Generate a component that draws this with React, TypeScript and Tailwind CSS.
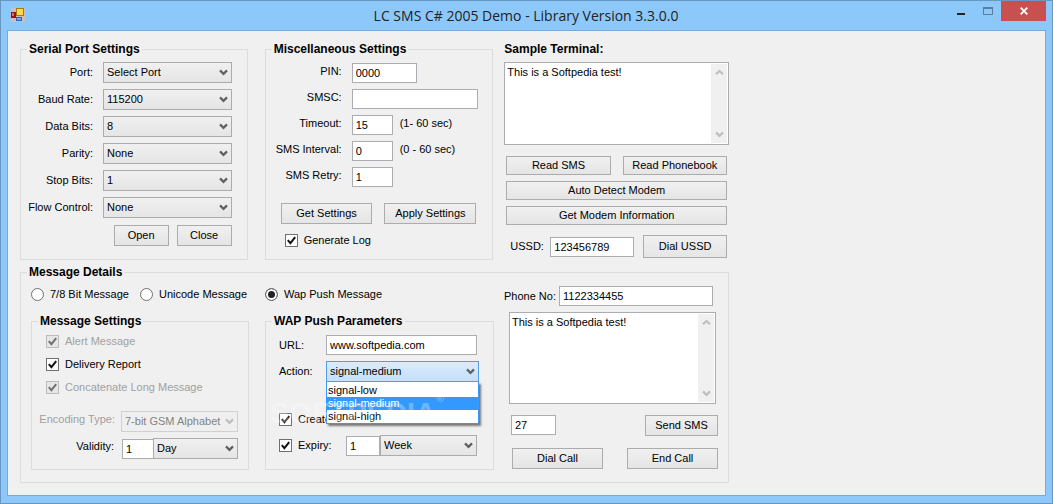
import React, { useState } from 'react';
import clsx from 'clsx';

const FIELD = 'border border-[#abadb3] bg-white outline-none';

function Chevron({ up, className }: { up?: boolean; className?: string }) {
  return (
    <svg viewBox="0 0 9 7" className={clsx('pointer-events-none h-[7px] w-[9px] shrink-0', className)}>
      <path
        d={up ? 'M1 5.2 L4.5 1.9 L8 5.2' : 'M1 1.4 L4.5 4.9 L8 1.4'}
        fill="none"
        stroke="currentColor"
        strokeWidth="2.2"
      />
    </svg>
  );
}

function Group({ title, className, children }: { title: string; className?: string; children: React.ReactNode }) {
  return (
    <fieldset className="min-w-0 border border-[#dcdcdc]">
      <legend className="ml-1.5 h-[13px] px-0.5 text-xs font-bold leading-[13px]">{title}</legend>
      <div className={clsx('relative', className)}>{children}</div>
    </fieldset>
  );
}

const buttonHeights = {
  small: 'h-[19px]',
  normal: 'h-[21px]',
  large: 'h-[23px]',
};

interface ButtonProps {
  size?: keyof typeof buttonHeights;
  className?: string;
  children: React.ReactNode;
}

function Button({ size = 'normal', className, children }: ButtonProps) {
  return (
    <button
      type="button"
      className={clsx(
        'whitespace-nowrap border border-[#acacac] bg-linear-to-b from-[#f0f0f0] to-[#e5e5e5] text-center hover:border-[#7eb4ea]',
        buttonHeights[size],
        className,
      )}
    >
      {children}
    </button>
  );
}

interface SelectProps {
  id: string;
  options: string[];
  label?: string;
  value?: string;
  disabled?: boolean;
  open?: boolean;
  className?: string;
}

function Select({ id, options, label, value, disabled, open, className }: SelectProps) {
  return (
    <div className={clsx('relative h-[21px]', className)}>
      <select
        id={id}
        aria-label={label}
        defaultValue={value}
        disabled={disabled}
        className={clsx(
          'block h-full w-full appearance-none border pl-[3px] pr-4 outline-none',
          open && 'border-[#569de5] bg-linear-to-b from-[#daecfc] to-[#c4e0fc]',
          disabled && 'border-[#d0d0d0] bg-[#efefef] text-[#838383] opacity-100',
          !open && !disabled && 'border-[#acacac] bg-linear-to-b from-[#f0f0f0] to-[#e5e5e5]',
        )}
      >
        {options.map(option => (
          <option key={option}>{option}</option>
        ))}
      </select>
      <Chevron className={clsx('absolute right-1 top-[7px]', disabled ? 'text-[#bfbfbf]' : 'text-[#606060]')} />
    </div>
  );
}

function TextInput({ id, value, label, className }: { id: string; value?: string; label?: string; className?: string }) {
  return (
    <input
      id={id}
      type="text"
      aria-label={label}
      defaultValue={value}
      className={clsx(FIELD, 'h-5 min-w-0 px-[3px]', className)}
    />
  );
}

function CheckBox({ label, disabled }: { label: string; disabled?: boolean }) {
  return (
    <label className={clsx('flex h-[15px] items-center gap-1.5 whitespace-nowrap', disabled && 'text-[#a0a0a0]')}>
      <span className="relative h-[13px] w-[13px] shrink-0">
        <input
          type="checkbox"
          defaultChecked
          disabled={disabled}
          className={clsx(
            'peer block h-[13px] w-[13px] appearance-none border',
            disabled ? 'border-[#bcbcbc] bg-[#e6e6e6]' : 'border-[#707070] bg-white',
          )}
        />
        <svg
          viewBox="0 0 13 13"
          className={clsx(
            'pointer-events-none absolute inset-0 hidden h-[13px] w-[13px] peer-checked:block',
            disabled ? 'text-[#707070]' : 'text-[#111111]',
          )}
        >
          <path d="M2.8 6.2 L5.4 9.2 L10.2 3.2" fill="none" stroke="currentColor" strokeWidth="2" />
        </svg>
      </span>
      {label}
    </label>
  );
}

function TextArea({ id, label, value, className }: { id: string; label: string; value: string; className?: string }) {
  return (
    <div className={clsx(FIELD, 'flex p-px', className)}>
      <textarea
        id={id}
        aria-label={label}
        defaultValue={value}
        className="min-w-0 flex-1 resize-none overflow-hidden px-px pt-px leading-[14px] outline-none"
      />
      <div className="flex w-4 flex-col items-center justify-between bg-[#f0f0f0] py-[5px] text-[#bfbfbf]">
        <Chevron up />
        <Chevron />
      </div>
    </div>
  );
}

const serialSettings = [
  { id: 'port', label: 'Port:', value: 'Select Port' },
  { id: 'baud', label: 'Baud Rate:', value: '115200' },
  { id: 'data-bits', label: 'Data Bits:', value: '8' },
  { id: 'parity', label: 'Parity:', value: 'None' },
  { id: 'stop-bits', label: 'Stop Bits:', value: '1' },
  { id: 'flow', label: 'Flow Control:', value: 'None' },
];

const miscSettings = [
  { id: 'pin', label: 'PIN:', value: '0000', width: 'w-[65px]', hint: '' },
  { id: 'smsc', label: 'SMSC:', value: '', width: 'w-[126px]', hint: '' },
  { id: 'timeout', label: 'Timeout:', value: '15', width: 'w-[41px]', hint: '(1- 60 sec)' },
  { id: 'interval', label: 'SMS Interval:', value: '0', width: 'w-[41px]', hint: '(0 - 60 sec)' },
  { id: 'retry', label: 'SMS Retry:', value: '1', width: 'w-[41px]', hint: '' },
];

const messageTypes = ['7/8 Bit Message', 'Unicode Message', 'Wap Push Message'];
const actions = ['signal-low', 'signal-medium', 'signal-high'];

function TitleBar() {
  return (
    <header className="flex h-[29px] items-start">
      <svg viewBox="0 0 14 14" className="ml-2.5 mt-[7px] h-3.5 w-3.5 shrink-0">
        <rect width="14" height="14" fill="#c3c3c3" />
        <rect x="5" y="0" width="8" height="8" fill="#a8780c" />
        <rect x="6" y="1" width="6" height="6" fill="#ffd84d" />
        <rect x="0" y="4" width="5" height="6" fill="#a01010" />
        <rect x="1" y="5" width="2" height="3" fill="#e86a5a" />
        <rect x="5" y="9" width="6" height="4" fill="#2f5fc0" />
        <rect x="6" y="10" width="4" height="2" fill="#7aa8f0" />
      </svg>
      <h1 className="flex-1 pl-20 text-center font-['Open_Sans',sans-serif] text-[14px] leading-[29px] text-[#222222]">
        LC SMS C# 2005 Demo - Library Version 3.3.0.0
      </h1>
      <div className="flex h-5 shrink-0">
        <button type="button" aria-label="Minimize" className="flex w-7 items-center justify-center pt-[5px]">
          <span className="h-0.5 w-2 bg-[#222222]" />
        </button>
        <button type="button" aria-label="Maximize" className="flex w-[26px] items-center justify-center">
          <span className="h-2 w-2.5 border border-t-2 border-[#5c7d9c]" />
        </button>
        <button type="button" aria-label="Close" className="flex w-[45px] items-center justify-center bg-[#c75050]">
          <svg viewBox="0 0 8 8" className="h-2 w-2">
            <path d="M0.7 0.7 L7.3 7.3 M7.3 0.7 L0.7 7.3" stroke="#ffffff" strokeWidth="1.8" />
          </svg>
        </button>
      </div>
      <div className="w-1.5 shrink-0" />
    </header>
  );
}

function SerialPortSettings() {
  return (
    <Group title="Serial Port Settings" className="pb-[13px] pr-[15px]">
      <div className="flex flex-col gap-1.5 pt-1.5">
        {serialSettings.map(item => (
          <div key={item.id} className="flex items-center">
            <label htmlFor={item.id} className="w-[82px] pr-2.5 text-right">
              {item.label}
            </label>
            <Select id={item.id} options={[item.value]} className="flex-1" />
          </div>
        ))}
      </div>
      <div className="mt-[7px] flex justify-end gap-2">
        <Button className="w-[55px]">Open</Button>
        <Button className="w-[55px]">Close</Button>
      </div>
    </Group>
  );
}

function MiscSettings() {
  return (
    <Group title="Miscellaneous Settings">
      <div className="flex flex-col gap-1.5 pt-[7px]">
        {miscSettings.map(item => (
          <div key={item.id} className="flex items-center">
            <label htmlFor={item.id} className="w-[86px] shrink-0 pb-[3px] pr-2.5 text-right">
              {item.label}
            </label>
            <TextInput id={item.id} value={item.value} className={item.width} />
            {item.hint && <span className="pb-1 pl-[7px]">{item.hint}</span>}
          </div>
        ))}
      </div>
      <div className="mt-4 flex justify-between gap-3 pl-[15px] pr-4">
        <Button className="flex-1">Get Settings</Button>
        <Button className="flex-1">Apply Settings</Button>
      </div>
      <div className="mt-[9px] pl-[19px]">
        <CheckBox label="Generate Log" />
      </div>
    </Group>
  );
}

function Terminal() {
  return (
    <div className="-ml-1.5 flex min-w-0 flex-col">
      <label htmlFor="terminal" className="mb-1.5 text-xs leading-[13px] font-bold">
        Sample Terminal:
      </label>
      <TextArea id="terminal" label="Sample Terminal" value="This is a Softpedia test!" className="h-[83px]" />
      <div className="mt-[11px] flex flex-col gap-1.5 px-0.5">
        <div className="flex gap-3">
          <Button size="small" className="flex-1">Read SMS</Button>
          <Button size="small" className="flex-1">Read Phonebook</Button>
        </div>
        <Button size="small">Auto Detect Modem</Button>
        <Button size="small">Get Modem Information</Button>
      </div>
      <div className="mt-2.5 flex items-center px-0.5">
        <label htmlFor="ussd" className="w-11 pl-1">
          USSD:
        </label>
        <TextInput id="ussd" value="123456789" className="w-[84px]" />
        <Button size="large" className="ml-[9px] flex-1">Dial USSD</Button>
      </div>
    </div>
  );
}

function MessageSettings() {
  return (
    <Group title="Message Settings" className="pb-2.5 pr-2.5">
      <div className="flex flex-col gap-2 pl-3.5 pt-1.5">
        <CheckBox label="Alert Message" disabled />
        <CheckBox label="Delivery Report" />
        <CheckBox label="Concatenate Long Message" disabled />
      </div>
      <div className="mt-4 flex items-center">
        <label htmlFor="encoding" className="w-[89px] whitespace-nowrap pb-1 pr-1.5 text-right text-[#a0a0a0]">
          Encoding Type:
        </label>
        <Select id="encoding" options={['7-bit GSM Alphabet']} disabled className="min-w-0 flex-1" />
      </div>
      <div className="mt-1.5 flex items-end">
        <label htmlFor="validity" className="w-[90px] pb-1.5 pr-2 text-right">
          Validity:
        </label>
        <TextInput id="validity" value="1" className="w-8" />
        <Select id="validity-unit" label="Validity unit" options={['Day', 'Week']} className="-ml-px flex-1" />
      </div>
    </Group>
  );
}

function WapPushParameters() {
  const [action, setAction] = useState('signal-medium');

  return (
    <Group title="WAP Push Parameters" className="pl-[13px] pr-3.5">
      <div className="flex items-center pr-0.5 pt-[7px]">
        <label htmlFor="url" className="w-[47px]">
          URL:
        </label>
        <TextInput id="url" value="www.softpedia.com" className="flex-1" />
      </div>
      <div className="mt-1.5 flex items-center">
        <label htmlFor="action" className="w-[47px]">
          Action:
        </label>
        <div className="relative flex-1">
          <Select key={action} id="action" options={actions} value={action} open />
          <ul
            role="listbox"
            aria-label="Action"
            className="absolute inset-x-0 top-full z-10 border border-t-0 border-[#3399ff] bg-white pt-0.5 shadow-[2px_2px_2px_rgba(0,0,0,0.5)]"
          >
            {actions.map(item => (
              <li
                key={item}
                role="option"
                aria-selected={item === action}
                onClick={() => setAction(item)}
                className={clsx('h-[13px] px-px leading-[13px]', item === action && 'bg-[#3399ff] text-white')}
              >
                {item}
              </li>
            ))}
          </ul>
        </div>
      </div>
      <div className="mt-[30px]">
        <CheckBox label="Created" />
      </div>
      <div className="mt-2 flex items-end pr-0.5">
        <div className="w-[67px] pb-[3px]">
          <CheckBox label="Expiry:" />
        </div>
        <TextInput id="expiry" label="Expiry" value="1" className="w-[34px]" />
        <Select id="expiry-unit" label="Expiry unit" options={['Week', 'Day']} className="flex-1" />
      </div>
      <div
        aria-hidden="true"
        className="pointer-events-none absolute left-1 top-[69px] z-20 flex text-[29px] font-bold leading-8 text-white/30"
      >
        SOFTPEDIA<sup className="text-[11px] leading-3">®</sup>
      </div>
    </Group>
  );
}

function MessageDetails() {
  return (
    <Group title="Message Details" className="pb-3">
      <div className="flex gap-2.5 px-2.5">
        <div className="min-w-0 flex-[463]">
          <div className="grid h-6 grid-cols-[109fr_125fr_229fr] items-center pt-1.5">
            {messageTypes.map((type, i) => (
              <label key={type} className="flex items-center gap-1.5 whitespace-nowrap">
                <input
                  type="radio"
                  name="message-type"
                  defaultChecked={i === 2}
                  className="h-[13px] w-[13px] shrink-0 appearance-none rounded-full border border-[#707070] bg-white checked:bg-[#222222] checked:shadow-[inset_0_0_0_2px_#ffffff]"
                />
                {type}
              </label>
            ))}
          </div>
          <div className="mt-3 grid grid-cols-[218fr_229fr] gap-4">
            <MessageSettings />
            <WapPushParameters />
          </div>
        </div>
        <div className="min-w-0 flex-[214] pt-[7px]">
          <div className="flex items-center pr-[5px]">
            <label htmlFor="phone" className="w-[55px] whitespace-nowrap">
              Phone No:
            </label>
            <TextInput id="phone" value="1122334455" className="flex-1" />
          </div>
          <TextArea id="message" label="Message" value="This is a Softpedia test!" className="ml-[5px] mr-0.5 mt-1.5 h-[92px]" />
          <div className="mt-[11px] flex justify-between pl-[7px]">
            <TextInput id="count" label="Characters" value="27" className="w-[45px]" />
            <Button className="w-[73px]">Send SMS</Button>
          </div>
          <div className="mt-3 flex justify-between gap-6 pl-2">
            <Button className="flex-1">Dial Call</Button>
            <Button className="flex-1">End Call</Button>
          </div>
        </div>
      </div>
    </Group>
  );
}

function App() {
  return (
    <div className="flex min-h-screen flex-col border border-[#6a96c2] bg-[#8dc8fa] px-1.5 pb-[7px] font-['Liberation_Sans',Arial,sans-serif] text-[11px] leading-[13px] text-black">
      <div className="-mx-1.5">
        <TitleBar />
      </div>
      <main className="flex-1 border border-[#79a9da] bg-[#f0f0f0] px-3 pb-3 pt-3">
        <div className="max-w-[709px]">
          <div className="grid grid-cols-[228fr_229fr_219fr] gap-x-[17px]">
            <SerialPortSettings />
            <MiscSettings />
            <Terminal />
          </div>
          <div className="mt-1.5">
            <MessageDetails />
          </div>
        </div>
      </main>
    </div>
  );
}

export default App;
